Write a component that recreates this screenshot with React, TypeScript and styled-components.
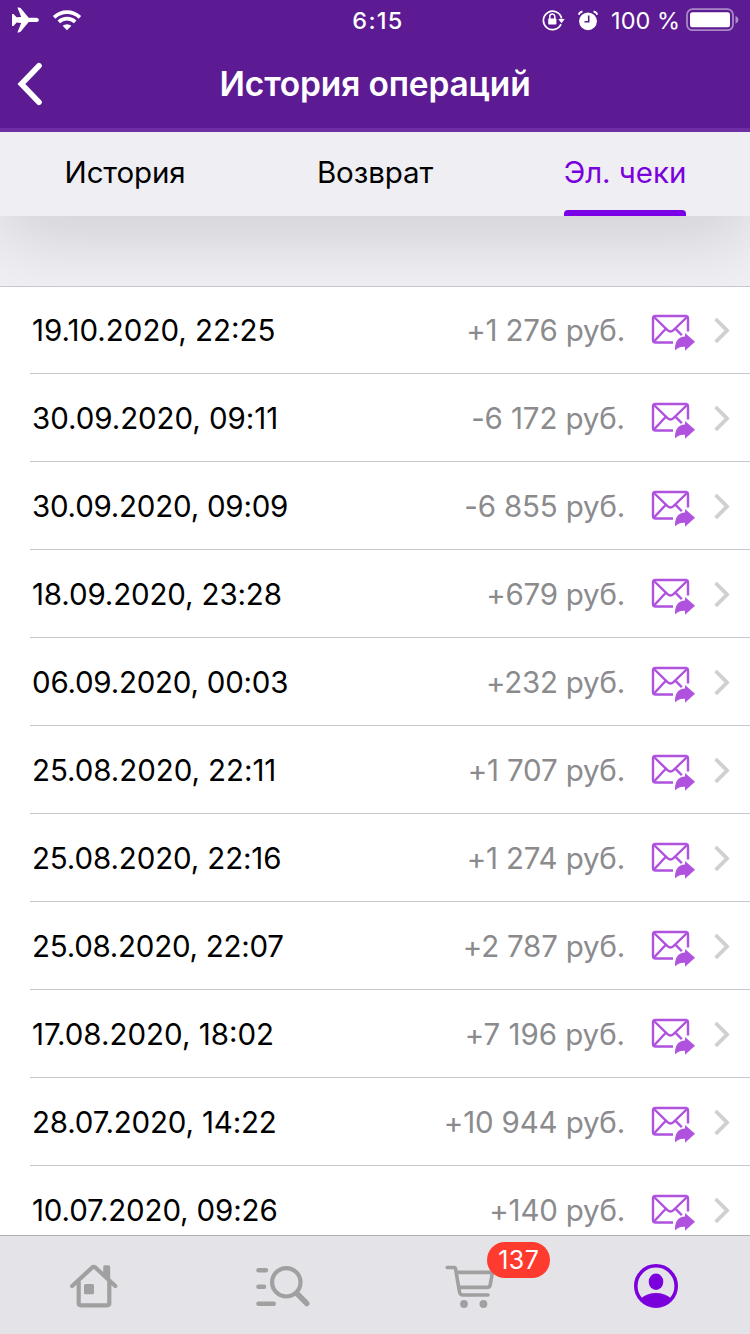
import React from "react";
import styled, { createGlobalStyle } from "styled-components";

const GlobalStyle = createGlobalStyle`
  *, *::before, *::after { box-sizing: border-box; }
  html, body { margin: 0; padding: 0; }
  body { font-family: Inter, "Liberation Sans", sans-serif; font-kerning: normal; }
  svg { display: block; flex: none; }
`;

const Screen = styled.div`
  width: 750px;
  height: 1334px;
  display: flex;
  flex-direction: column;
  overflow: hidden;
  background: #efeff4;
  color: #000;
`;

const Header = styled.header`
  flex: none;
  height: 132px;
  background: #5c1a93;
  border-bottom: 4px solid #6f2da3;
  color: #fff;
`;

const StatusBar = styled.div`
  height: 40px;
  display: grid;
  grid-template-columns: 1fr auto 1fr;
  align-items: center;
  padding: 0 11px 0 11px;
`;

const StatusLeft = styled.div`
  display: flex;
  align-items: center;
  gap: 13px;
`;

const Clock = styled.div`
  font-size: 23.5px;
  font-weight: 500;
  letter-spacing: 1.3px;
  line-height: 28px;
  padding-top: 2px;
  margin-left: 6px;
`;

const StatusRight = styled.div`
  display: flex;
  align-items: center;
  justify-content: flex-end;
  gap: 13px;
`;

const BatteryText = styled.span`
  font-size: 23.5px;
  line-height: 28px;
  letter-spacing: 0px;
  padding-top: 2px;
  margin-right: -7px;
  white-space: nowrap;
`;

const NavBar = styled.div`
  height: 88px;
  display: grid;
  grid-template-columns: 60px 1fr 60px;
  align-items: center;
`;

const BackButton = styled.button`
  border: 0;
  padding: 0 0 0 17px;
  background: none;
  color: inherit;
`;

const Title = styled.h1`
  margin: 0;
  text-align: center;
  font-size: 33.5px;
  line-height: 40px;
  font-weight: 600;
  letter-spacing: -0.15px;
`;

const Tabs = styled.nav`
  flex: none;
  height: 84px;
  display: grid;
  grid-template-columns: repeat(3, 250px);
  justify-items: center;
  background: #efeff3;
`;

const Tab = styled.div<{ $active?: boolean; $spacing: number }>`
  height: 84px;
  padding-top: 22px;
  font-size: 29.5px;
  line-height: 36px;
  letter-spacing: ${(p) => p.$spacing}px;
  color: ${(p) => (p.$active ? "#7a00dc" : "#000")};
  display: flex;
  flex-direction: column;
  justify-content: space-between;
  &::after {
    content: "";
    height: 6px;
    border-radius: 4px 4px 0 0;
    background: ${(p) => (p.$active ? "#7a00e6" : "transparent")};
  }
`;

const Spacer = styled.div`
  flex: none;
  height: 70px;
  overflow: hidden;
  &::before {
    content: "";
    display: block;
    width: 750px;
    height: 80px;
    margin-top: -80px;
    box-shadow: 0 18px 76px rgba(0, 0, 0, 0.15);
  }
`;

const List = styled.ul`
  flex: 1;
  min-height: 0;
  overflow: hidden;
  margin: 0;
  padding: 0;
  list-style: none;
  background: #fff;
  box-shadow: inset 0 1px 0 #c8c7cc;
`;

const Row = styled.li`
  height: 88px;
  margin-left: 30px;
  padding: 1px 20px 0 2px;
  display: flex;
  align-items: center;
  border-bottom: 1px solid #c8c7cc;
`;

const DateText = styled.span<{ $spacing: number }>`
  flex: 1;
  font-size: 29.5px;
  line-height: 36px;
  letter-spacing: ${(p) => p.$spacing}px;
`;

const Amount = styled.span<{ $spacing: number }>`
  font-size: 29.5px;
  line-height: 36px;
  letter-spacing: ${(p) => p.$spacing}px;
  color: #8b8b8d;
  margin-right: 26px;
  white-space: nowrap;
`;

const RowIcons = styled.div`
  display: flex;
  align-items: center;
  gap: 19px;
`;

const TabBar = styled.footer`
  flex: none;
  height: 99px;
  display: grid;
  grid-template-columns: repeat(4, 1fr);
  justify-items: center;
  align-items: center;
  padding-top: 2px;
  background: #e4e4e8;
  border-top: 1px solid #afafb4;
`;

const BarItem = styled.div<{ $shift?: number }>`
  position: relative;
  color: #a0a0a1;
  margin-left: ${(p) => p.$shift ?? 0}px;
`;

const Badge = styled.span`
  position: absolute;
  left: 42px;
  top: -22px;
  width: 63px;
  height: 36px;
  border-radius: 18px;
  background: #ff3b30;
  color: #fff;
  font-size: 25px;
  line-height: 36px;
  letter-spacing: 0.4px;
  text-align: center;
`;

const PlaneIcon = () => (
  <svg width="28" height="26" viewBox="0 0 28 26" fill="currentColor">
    <path d="M25.5 10.7h-7.8L9.8 1.2Q9 .4 7.8.4H6.4l3.8 9.500-4.600.4L2.500 6.900H1v12h1.500l3.100-3.400 4.600.4L6.400 25.400h1.400q1.200 0 2-.8l7.900-9.500h7.800q2.400-.4 2.400-2.200t-2.400-2.200Z" />
  </svg>
);

const WifiIcon = () => (
  <svg width="30" height="22" viewBox="0 0 30 22" fill="none" stroke="currentColor" strokeWidth="3.800">
    <path d="M2.1 8.3Q7.8 3.200 15 3.200t12.9 5.1" />
    <path d="M6.8 12.900Q10.300 9.700 15 9.700t8.200 3.200" />
    <path d="M15 21.200l-4.400-4.400Q12.400 15.200 15 15.200t4.400 1.600Z" fill="currentColor" stroke="none" />
  </svg>
);

const RotationLockIcon = () => (
  <svg width="23" height="22" viewBox="0 0 23 22" fill="none" stroke="currentColor">
    <path d="M19 15.200A9.200 9.200 0 1 1 19.600 9.500" strokeWidth="1.700" />
    <path d="M16.300 10h6.400l-3.200 4.200Z" fill="currentColor" stroke="none" />
    <path d="M7.800 10V7.600a2.500 2.500 0 0 1 5 0V10" strokeWidth="1.500" />
    <rect x="6.200" y="9.600" width="8.200" height="6" rx=".8" fill="currentColor" stroke="none" />
  </svg>
);

const AlarmIcon = () => (
  <svg width="20" height="21" viewBox="0 0 20 21" fill="none">
    <circle cx="10" cy="11.300" r="8.900" fill="currentColor" />
    <path d="M.8 4.800Q1.500 2 4.500 1.500M19.200 4.800Q18.500 2 15.500 1.500" stroke="currentColor" strokeWidth="1.800" />
    <path d="M10.700 5.500v6.200H6.500" stroke="#5c1a93" strokeWidth="1.600" />
  </svg>
);

const BatteryIcon = () => (
  <svg width="53" height="24" viewBox="0 0 53 24">
    <rect x="1" y="1.200" width="46" height="21" rx="5.500" fill="none" stroke="#fff" strokeOpacity=".48" strokeWidth="1.800" />
    <rect x="4" y="4.200" width="40" height="15" rx="2.500" fill="#fff" />
    <path d="M49.500 7.800q3 1.300 3 4t-3 4Z" fill="#fff" fillOpacity=".5" />
  </svg>
);

const BackIcon = () => (
  <svg width="26" height="44" viewBox="0 0 26 44" fill="none" stroke="currentColor" strokeWidth="5.600" strokeLinecap="round" strokeLinejoin="miter">
    <path d="M22 3.800 4.400 22 22 40.200" />
  </svg>
);

const MailIcon = () => (
  <svg width="44" height="42" viewBox="0 0 44 42" fill="none" stroke="#af52de" strokeWidth="2.400">
    <path d="M37 22.500V9.500Q37 7 34.500 7H4.500Q2 7 2 9.500v21.500Q2 33.500 4.500 33.500h17.500" />
    <path d="M3 8l13.500 13.200q3 2.600 6 0L36 8M3 32.500l11.800-12.800M24.300 19.700l6.500 6.500" />
    <path d="M34 24 44 32.800 34 41.700v-3.900q-6.500-.6-10 3.800-.5-13.500 10-14.100Z" fill="#af52de" stroke="none" />
  </svg>
);

const ChevronIcon = () => (
  <svg width="16" height="27" viewBox="0 0 16 27" fill="none" stroke="#d0d0d3" strokeWidth="3.900">
    <path d="M1.600 2 13 13.500 1.600 25" />
  </svg>
);

const HomeIcon = () => (
  <svg width="48" height="46" viewBox="0 0 48 46" fill="none" stroke="currentColor" strokeWidth="4.200" strokeLinecap="round" strokeLinejoin="round">
    <path d="M2.200 23 22 4.700q1.800-1.500 3.600 0L45.300 23" />
    <path d="M8.700 19v21.300q0 2 2 2h26.600q2 0 2-2V19" />
    <path d="M33.200 4q0-1.800 1.800-1.800h3.400q1.800 0 1.800 1.800v15l-7-6Z" fill="currentColor" stroke="none" />
    <rect x="14" y="21" width="10" height="10.200" rx="1.500" fill="currentColor" stroke="none" />
  </svg>
);

const SearchIcon = () => (
  <svg width="54" height="46" viewBox="0 0 54 46" fill="none" stroke="currentColor" strokeWidth="4.600" strokeLinecap="round">
    <path d="M2.500 7.300h7.400M2.500 23.700h5.500M2.500 40.700h15.200" />
    <circle cx="30.300" cy="19.300" r="14.200" strokeWidth="4.200" />
    <path d="m41 30.500 9.800 10" strokeWidth="5.400" />
  </svg>
);

const CartIcon = () => (
  <svg width="50" height="44" viewBox="0 0 50 44" fill="none" stroke="currentColor" strokeWidth="3.600" strokeLinecap="round" strokeLinejoin="round">
    <path d="M2.200 3.500h7.300q.8 0 1 1l4 23.500q.5 3 3.500 3h25" />
    <path d="M12.300 8.400h35.200l-2.300 12.500q-.5 2.500-3 2.500H15" />
    <circle cx="19" cy="40" r="3.900" fill="currentColor" stroke="none" />
    <circle cx="38.400" cy="40" r="3.900" fill="currentColor" stroke="none" />
  </svg>
);

const ProfileIcon = () => (
  <svg width="44" height="44" viewBox="0 0 44 44" fill="#7a00dc">
    <circle cx="22" cy="22" r="20.200" fill="none" stroke="#7a00dc" strokeWidth="3.600" />
    <ellipse cx="22" cy="17.700" rx="7.300" ry="8.200" />
    <path d="M7 34.500Q13 29 22 29t15 5.500Q31 42.500 22 42.500T7 34.500Z" />
  </svg>
);

type Receipt = { date: string; amount: string; dateSpacing: number; amountSpacing: number };

const receipts: Receipt[] = [
  { date: "19.10.2020, 22:25", amount: "+1 276 руб.", dateSpacing: 0, amountSpacing: -0.17 },
  { date: "30.09.2020, 09:11", amount: "-6 172 руб.", dateSpacing: -0.06, amountSpacing: -0.12 },
  { date: "30.09.2020, 09:09", amount: "-6 855 руб.", dateSpacing: -0.23, amountSpacing: -0.18 },
  { date: "18.09.2020, 23:28", amount: "+679 руб.", dateSpacing: -0.14, amountSpacing: -0.22 },
  { date: "06.09.2020, 00:03", amount: "+232 руб.", dateSpacing: -0.23, amountSpacing: -0.22 },
  { date: "25.08.2020, 22:11", amount: "+1 707 руб.", dateSpacing: -0.06, amountSpacing: -0.17 },
  { date: "25.08.2020, 22:16", amount: "+1 274 руб.", dateSpacing: -0.13, amountSpacing: -0.17 },
  { date: "25.08.2020, 22:07", amount: "+2 787 руб.", dateSpacing: -0.25, amountSpacing: -0.2 },
  { date: "17.08.2020, 18:02", amount: "+7 196 руб.", dateSpacing: 0, amountSpacing: -0.05 },
  { date: "28.07.2020, 14:22", amount: "+10 944 руб.", dateSpacing: -0.18, amountSpacing: -0.17 },
  { date: "10.07.2020, 09:26", amount: "+140 руб.", dateSpacing: -0.15, amountSpacing: -0.2 },
];

export default function App() {
  return (
    <>
      <GlobalStyle />
      <Screen>
        <Header>
          <StatusBar>
            <StatusLeft>
              <PlaneIcon />
              <WifiIcon />
            </StatusLeft>
            <Clock>6:15</Clock>
            <StatusRight>
              <RotationLockIcon />
              <AlarmIcon />
              <BatteryText>100 %</BatteryText>
              <BatteryIcon />
            </StatusRight>
          </StatusBar>
          <NavBar>
            <BackButton aria-label="Назад">
              <BackIcon />
            </BackButton>
            <Title>История операций</Title>
          </NavBar>
        </Header>
        <Tabs>
          <Tab $spacing={-0.15}>История</Tab>
          <Tab $spacing={-0.1}>Возврат</Tab>
          <Tab $spacing={-0.05} $active>Эл. чеки</Tab>
        </Tabs>
        <Spacer />
        <List>
          {receipts.map((r) => (
            <Row key={r.date}>
              <DateText $spacing={r.dateSpacing}>{r.date}</DateText>
              <Amount $spacing={r.amountSpacing}>{r.amount}</Amount>
              <RowIcons>
                <MailIcon />
                <ChevronIcon />
              </RowIcons>
            </Row>
          ))}
        </List>
        <TabBar>
          <BarItem>
            <HomeIcon />
          </BarItem>
          <BarItem $shift={3}>
            <SearchIcon />
          </BarItem>
          <BarItem $shift={3}>
            <CartIcon />
            <Badge>137</Badge>
          </BarItem>
          <BarItem>
            <ProfileIcon />
          </BarItem>
        </TabBar>
      </Screen>
    </>
  );
}
